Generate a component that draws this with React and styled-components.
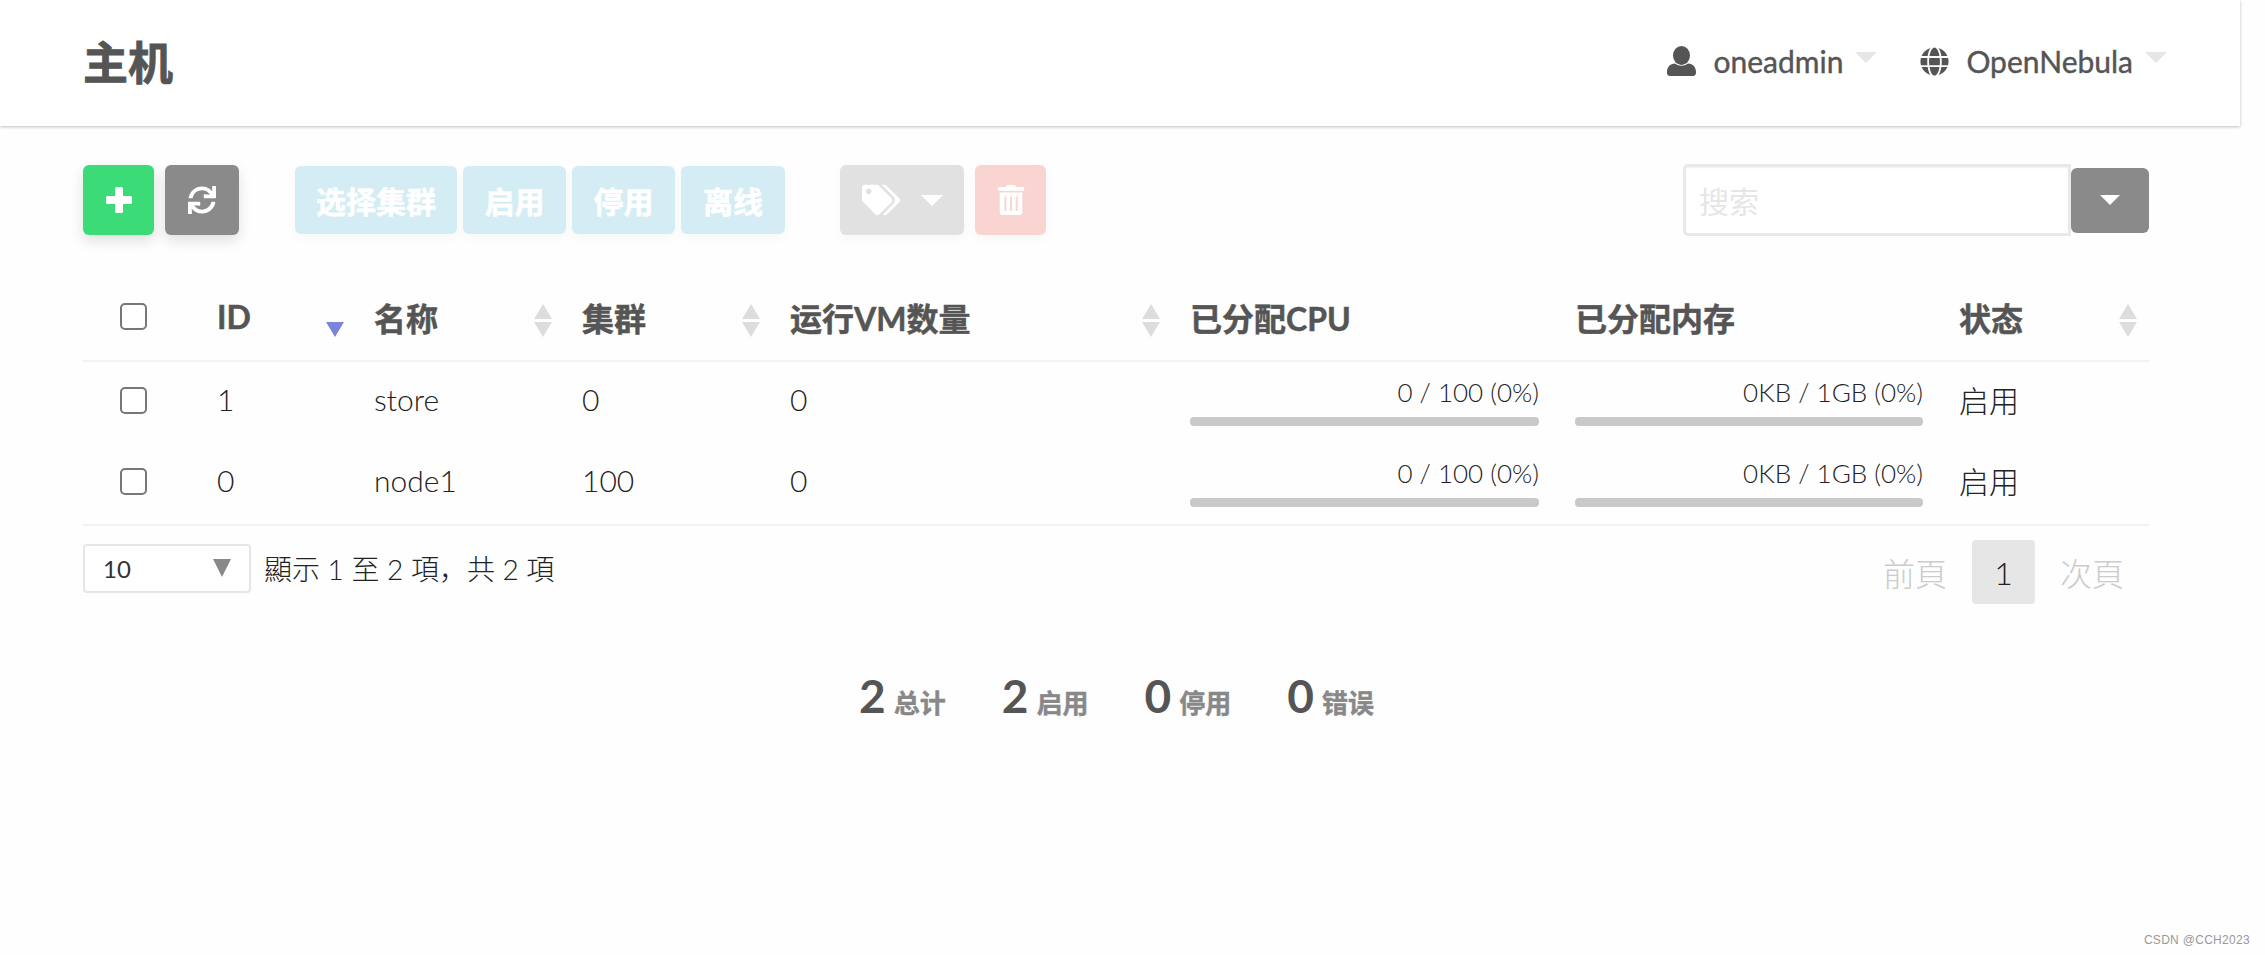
import React from 'react';
import styled, { createGlobalStyle } from 'styled-components';
import { FaSync, FaTags, FaTrashAlt, FaGlobe } from 'react-icons/fa';

const FONT = `Lato, "Noto Sans CJK SC", sans-serif`;

const Global = createGlobalStyle`
  html, body { margin: 0; padding: 0; background: #fefefe; }
  body { font-family: ${FONT}; color: #555; overflow: hidden; }
  * { box-sizing: border-box; }
`;

const Page = styled.div`
  position: relative;
  width: 2265px;
  height: 955px;
`;

const Header = styled.header`
  width: 2240px;
  height: 126px;
  padding: 0 73px 0 83px;
  display: flex;
  align-items: center;
  justify-content: space-between;
  background: #fff;
  box-shadow: 0 1px 3px rgba(0, 0, 0, 0.25);
`;

const Title = styled.h1`
  margin: -5px 0 0;
  font-size: 45px;
  font-weight: 700;
  color: #555;
  -webkit-text-stroke: 0.8px #555;
`;

const UserNav = styled.nav`
  display: flex;
  align-items: center;
  gap: 43px;
  margin-top: -4px;
`;

const NavItem = styled.a`
  display: flex;
  align-items: center;
  font-size: 30px;
  color: #555;
  -webkit-text-stroke: 0.4px #555;
`;

const NavIcon = styled.span`
  display: flex;
  margin-right: 17px;
  -webkit-text-stroke: 0;
`;

const NavCaret = styled.span`
  width: 0;
  height: 0;
  margin-left: 12px;
  margin-top: -8px;
  border: 11px solid transparent;
  border-top-color: #e6e6e6;
  border-bottom-width: 0;
`;

const Toolbar = styled.div`
  display: flex;
  align-items: center;
  margin: 39px 116px 0 83px;
  height: 70px;
`;

const Button = styled.button`
  height: ${p => p.$h || 68}px;
  width: ${p => p.$w}px;
  margin-left: ${p => p.$ml || 0}px;
  padding: 0;
  border: 0;
  border-radius: 6px;
  display: flex;
  align-items: center;
  justify-content: center;
  gap: 21px;
  font-family: ${FONT};
  font-size: 30px;
  font-weight: 700;
  color: #fff;
  background: ${p => p.$bg};
  box-shadow: ${p => p.$shadow || 'none'};
  -webkit-text-stroke: 0.5px #fff;
`;

const Triangle = styled.span`
  width: 0;
  height: 0;
  border-left: ${p => p.$size}px solid transparent;
  border-right: ${p => p.$size}px solid transparent;
  border-top: ${p => p.$drop}px solid #fff;
`;

const SearchBox = styled.div`
  margin-left: auto;
  display: flex;
  align-items: center;
`;

const SearchInput = styled.div`
  width: 388px;
  height: 72px;
  padding: 0 13px;
  display: flex;
  align-items: center;
  font-size: 30px;
  color: #e6e6e6;
  background: #fff;
  border: 3px solid #e9e9e9;
  border-radius: 5px 0 0 5px;
  box-shadow: inset 0 1px 2px rgba(0, 0, 0, 0.06);
`;

const Table = styled.table`
  margin: 25px 0 0 83px;
  width: 2066px;
  table-layout: fixed;
  border-collapse: collapse;
`;

const Th = styled.th`
  position: relative;
  height: 101px;
  padding: 13px 18px 0;
  text-align: left;
  font-size: 32px;
  font-weight: 700;
  color: #555;
  border-bottom: 2px solid #f3f3f3;
  -webkit-text-stroke: 0.5px #555;
`;

const Td = styled.td`
  height: 82px;
  padding: 0 18px 8px;
  font-size: 30px;
  font-weight: 300;
  color: #222;
`;

const Row = styled.tr`
  &:last-child td { border-bottom: 2px solid #f3f3f3; }
`;

const Check = styled.span`
  display: block;
  width: 27px;
  height: 27px;
  margin-left: 19px;
  border: 2px solid #777;
  border-radius: 5px;
  background: #fff;
`;

const RowCheck = styled(Check)`
  margin-top: 3px;
`;

const SortIcon = styled.span`
  position: absolute;
  right: 12px;
  top: 44px;
  display: flex;
  flex-direction: column;
  gap: 3px;
  &::before, &::after {
    content: '';
    width: 0;
    height: 0;
    border-left: 9px solid transparent;
    border-right: 9px solid transparent;
  }
  &::before { border-bottom: 15px solid ${p => p.$active ? 'transparent' : '#ddd'}; }
  &::after { border-top: 15px solid ${p => p.$active ? '#7b83dc' : '#ddd'}; }
`;

const MeterLabel = styled.div`
  text-align: right;
  font-size: 26px;
  line-height: 30px;
  color: #222;
  margin-top: 5px;
`;

const MeterBar = styled.div`
  height: 9px;
  margin-top: 10px;
  border-radius: 4px;
  background: #c9c9c9;
`;

const Footer = styled.div`
  display: flex;
  align-items: center;
  margin: 6px 116px 0 83px;
`;

const PageSize = styled.div`
  width: 168px;
  height: 49px;
  padding: 0 18px;
  display: flex;
  align-items: center;
  justify-content: space-between;
  font-size: 24px;
  color: #333;
  background: #fff;
  border: 2px solid #e6e6e6;
  border-radius: 4px;
`;

const SizeCaret = styled.span`
  width: 0;
  height: 0;
  border-left: 9px solid transparent;
  border-right: 9px solid transparent;
  border-top: 18px solid #888;
`;

const Info = styled.span`
  margin-left: 13px;
  font-size: 28px;
  font-weight: 300;
  color: #222;
`;

const Pager = styled.div`
  margin-left: auto;
  margin-top: 8px;
  display: flex;
  align-items: center;
  gap: 25px;
  padding-right: 25px;
  font-size: 32px;
  font-weight: 300;
  color: #ccc;
`;

const CurrentPage = styled.span`
  width: 63px;
  height: 64px;
  display: flex;
  align-items: center;
  justify-content: center;
  color: #222;
  background: #e6e6e6;
  border-radius: 4px;
`;

const Stats = styled.div`
  display: flex;
  justify-content: center;
  gap: 56px;
  margin-top: 64px;
  padding-right: 32px;
`;

const Stat = styled.div`
  display: flex;
  align-items: baseline;
  gap: 8px;
`;

const StatNumber = styled.span`
  font-size: 46px;
  font-weight: 700;
  color: #555;
`;

const StatLabel = styled.span`
  font-size: 26px;
  font-weight: 700;
  color: #888;
  -webkit-text-stroke: 0.4px #888;
`;

const Watermark = styled.span`
  position: absolute;
  right: 15px;
  bottom: 8px;
  font-family: "Liberation Sans", sans-serif;
  font-size: 12px;
  letter-spacing: 0.3px;
  color: #999;
`;

const UserIcon = () => (
  <svg width="29" height="30" viewBox="0 0 29 30" fill="currentColor">
    <ellipse cx="14.5" cy="9.5" rx="8.5" ry="9.5" />
    <path d="M0 26c0-5 3-8 8-8.500 4 3 9 3 13 0 5 .5 8 3.500 8 8.500v1c0 2-1.500 3-3 3H3c-1.500 0-3-1-3-3z" />
  </svg>
);

const PlusIcon = () => (
  <svg width="26" height="26" viewBox="0 0 26 26" fill="currentColor">
    <rect x="9" y="0" width="8" height="26" rx="1.500" />
    <rect x="0" y="9" width="26" height="8" rx="1.500" />
  </svg>
);

const columns = [
  { w: 116 }, { w: 157, label: 'ID', sort: 'active' }, { w: 208, label: '名称', sort: true },
  { w: 208, label: '集群', sort: true }, { w: 400, label: '运行VM数量', sort: true },
  { w: 385, label: '已分配CPU' }, { w: 384, label: '已分配内存' }, { w: 208, label: '状态', sort: true },
];

const hosts = [
  { id: 1, name: 'store', cluster: 0 },
  { id: 0, name: 'node1', cluster: 100 },
];

const actions = [
  { label: '选择集群', w: 162, ml: 56 },
  { label: '启用', w: 103, ml: 6 },
  { label: '停用', w: 103, ml: 6 },
  { label: '离线', w: 104, ml: 6 },
];

const stats = [['2', '总计'], ['2', '启用'], ['0', '停用'], ['0', '错误']];

const Meter = ({ text }) => (
  <>
    <MeterLabel>{text}</MeterLabel>
    <MeterBar />
  </>
);

export default function App() {
  return (
    <Page>
      <Global />
      <Header>
        <Title>主机</Title>
        <UserNav>
          <NavItem><NavIcon><UserIcon /></NavIcon>oneadmin<NavCaret /></NavItem>
          <NavItem><NavIcon><FaGlobe size={29} /></NavIcon>OpenNebula<NavCaret /></NavItem>
        </UserNav>
      </Header>

      <Toolbar>
        <Button $w={71} $h={70} $bg="#3bdc78" $shadow="0 6px 14px rgba(0,0,0,0.12)"><PlusIcon /></Button>
        <Button $w={74} $h={70} $ml={11} $bg="#8a8a8a" $shadow="0 6px 14px rgba(0,0,0,0.12)"><FaSync size={28} /></Button>
        {actions.map(a => (
          <Button key={a.label} $w={a.w} $ml={a.ml} $bg="#d4edf4" $shadow="0 4px 12px rgba(0,0,0,0.03)">{a.label}</Button>
        ))}
        <Button $w={124} $h={70} $ml={55} $bg="#e1e1e1" $shadow="0 4px 12px rgba(0,0,0,0.03)">
          <FaTags size={38} /><Triangle $size={11} $drop={11} />
        </Button>
        <Button $w={71} $h={70} $ml={11} $bg="#fad4d0" $shadow="0 4px 12px rgba(0,0,0,0.03)"><FaTrashAlt size={30} /></Button>
        <SearchBox>
          <SearchInput>搜索</SearchInput>
          <Button $w={78} $h={65} $bg="#8a8a8a"><Triangle $size={10} $drop={10} /></Button>
        </SearchBox>
      </Toolbar>

      <Table>
        <colgroup>
          {columns.map((c, i) => <col key={i} style={{ width: c.w }} />)}
        </colgroup>
        <thead>
          <tr>
            <Th><Check /></Th>
            {columns.slice(1).map(c => (
              <Th key={c.label}>
                {c.label}
                {c.sort && <SortIcon $active={c.sort === 'active'} />}
              </Th>
            ))}
          </tr>
        </thead>
        <tbody>
          {hosts.map(h => (
            <Row key={h.id}>
              <Td><RowCheck /></Td>
              <Td>{h.id}</Td>
              <Td>{h.name}</Td>
              <Td>{h.cluster}</Td>
              <Td>0</Td>
              <Td><Meter text="0 / 100 (0%)" /></Td>
              <Td><Meter text="0KB / 1GB (0%)" /></Td>
              <Td>启用</Td>
            </Row>
          ))}
        </tbody>
      </Table>

      <Footer>
        <PageSize>10<SizeCaret /></PageSize>
        <Info>顯示 1 至 2 項，共 2 項</Info>
        <Pager>
          <span>前頁</span>
          <CurrentPage>1</CurrentPage>
          <span>次頁</span>
        </Pager>
      </Footer>

      <Stats>
        {stats.map(([n, label]) => (
          <Stat key={label}><StatNumber>{n}</StatNumber><StatLabel>{label}</StatLabel></Stat>
        ))}
      </Stats>

      <Watermark>CSDN @CCH2023</Watermark>
    </Page>
  );
}
